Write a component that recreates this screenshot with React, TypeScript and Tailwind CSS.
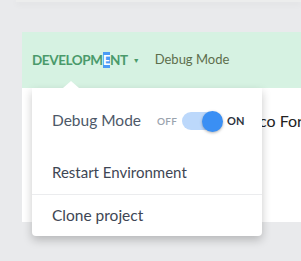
const font = { fontFamily: 'Lato, "Liberation Sans", sans-serif' };

function Toggle() {
  return (
    <div className="flex items-center">
      <span className="text-[10px] font-semibold text-[#9aa3ad] tracking-wide">OFF</span>
      <div className="relative ml-[5px] h-[18px] w-[40px] rounded-full bg-[#bcd8fb]">
        <div className="absolute -right-[1px] -top-[1.5px] h-[21px] w-[21px] rounded-full bg-[#3a8ff4] shadow-[0_1px_3px_rgba(0,0,0,0.3)]" />
      </div>
      <span className="ml-[5px] text-[11px] font-bold text-[#2d3440]">ON</span>
    </div>
  );
}

export default function App() {
  return (
    <div className="relative h-[261px] w-[301px] overflow-hidden bg-[#e9eaec]" style={font}>
      {/* top bar edge */}
      <div className="ml-[16px] h-[2px] bg-[#eceded] shadow-[0_2px_6px_rgba(0,0,0,0.08)]" />

      {/* main panel */}
      <div className="ml-[22px] mt-[30px] w-[300px]">
        <div className="flex h-[56px] items-center bg-[#d6f2e2] pl-[10px]">
          <span className="text-[13.5px] font-bold tracking-[-0.4px] text-[#4a9a6b]">
            DEVELOPM<span className="bg-[#4b9cf5] text-white">E</span>NT
          </span>
          <span className="ml-[5px] text-[7px] text-[#4a9a6b]">▼</span>
          <span className="ml-[15px] text-[13px] text-[#5d6e4c]">Debug Mode</span>
        </div>
        <div className="flex h-[134px] items-start bg-white pt-[21px]">
          <span className="ml-[237px] text-[16px] text-[#222]">co Forte</span>
        </div>
      </div>

      {/* dropdown */}
      <div className="absolute left-[32px] top-[88px] w-[230px] rounded-b-[4px] bg-white shadow-[0_4px_10px_rgba(0,0,0,0.22)]">
        <div className="absolute -top-[7px] left-[31px] h-0 w-0 border-x-[8px] border-b-[7px] border-x-transparent border-b-white" />
        <div className="flex h-[62px] items-center pl-[20px] pt-[4px] text-[15.5px] text-[#4d5868]">
          <span className="w-[105px]">Debug Mode</span>
          <Toggle />
        </div>
        <div className="flex h-[44px] items-center pl-[20px] text-[15px] text-[#3e4654]">
          Restart Environment
        </div>
        <div className="h-px bg-[#ebecee]" />
        <div className="flex h-[41px] items-center pl-[20px] text-[15.5px] text-[#3e4654]">
          Clone project
        </div>
      </div>
    </div>
  );
}
